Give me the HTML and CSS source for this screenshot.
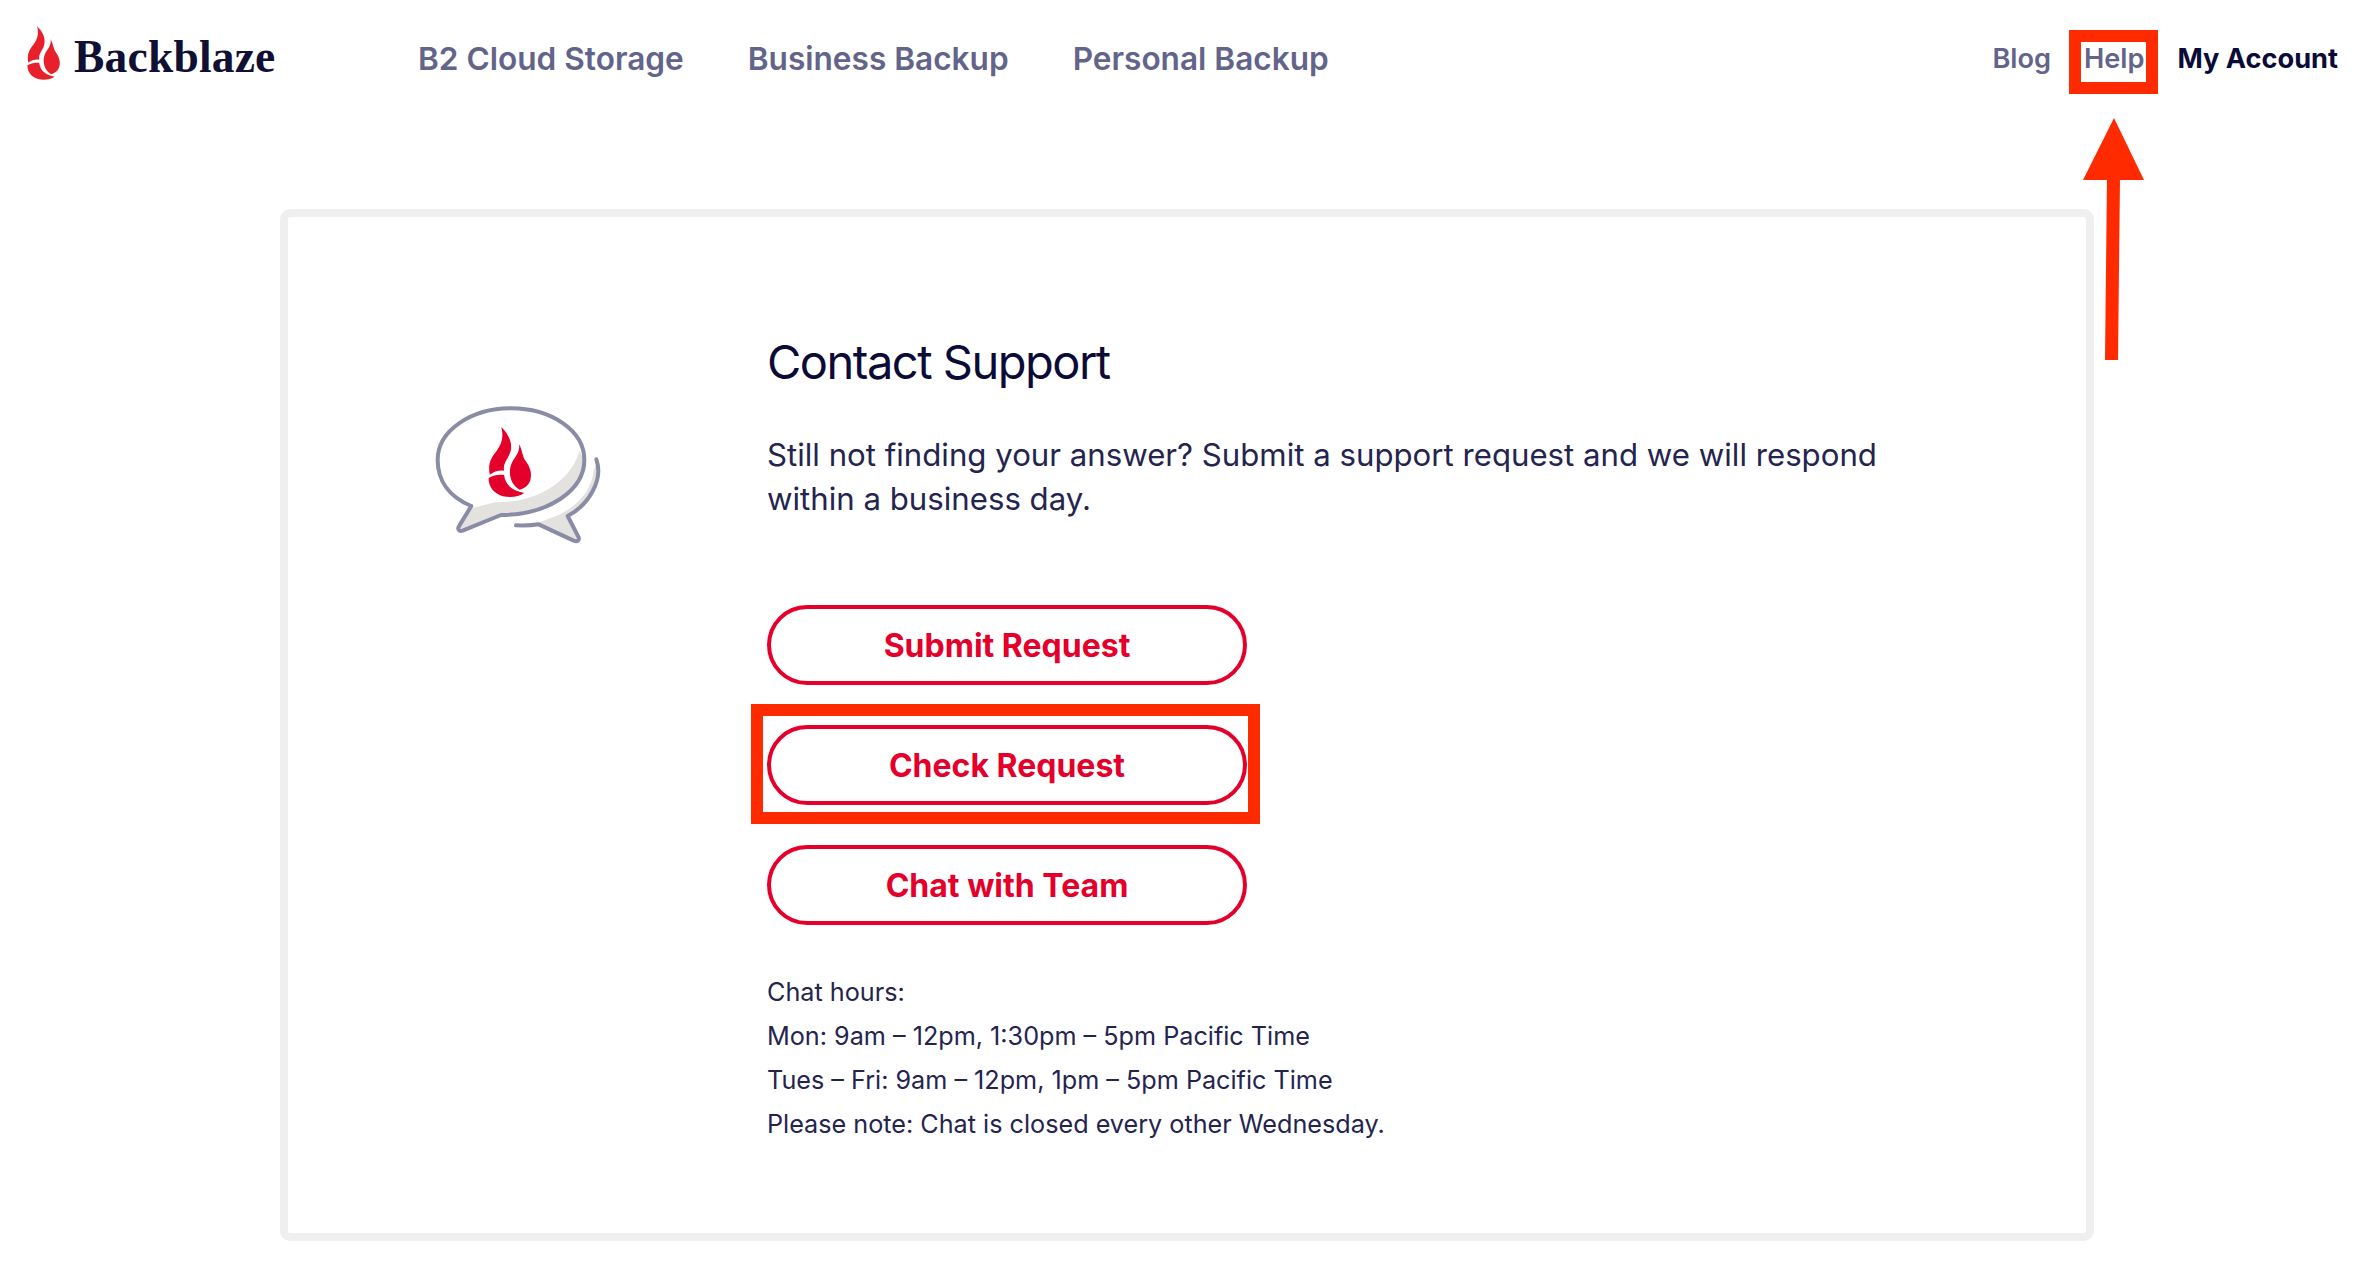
FILE: index.html
```html
<!DOCTYPE html>
<html lang="en">
<head>
  <meta charset="UTF-8" />
  <meta name="viewport" content="width=device-width, initial-scale=1.0" />
  <title>Contact Support - Backblaze</title>
  <link rel="stylesheet" href="styles.css">
</head>
<body>
  <svg class="defs" width="0" height="0">
    <symbol id="flame" viewBox="70 64 122 188">
      <path d="M110 70 C126 86 138 106 134 128 C130 148 113 160 117 180 C104 178 92 182 81 190 C75 162 85 146 98 130 C112 112 116 94 110 70 Z" />
      <path d="M155 113 C163 128 163 144 171 155 C182 170 188 186 183 204 C179 217 168 225 156 228 C141 218 134 206 132 190 C130 172 136 158 145 146 C152 136 156 126 155 113 Z" />
      <path d="M78 198 C92 191 104 188 117 191 C120 214 134 230 168 236 C150 249 116 249 100 238 C85 228 78 215 78 198 Z" />
    </symbol>
  </svg>

  <header class="topbar">
    <a class="logo" href="#">
      <svg class="logo-flame"><use href="#flame" /></svg>
      <span class="logo-text">Backblaze</span>
    </a>
    <nav class="main-nav">
      <a href="#">B2 Cloud Storage</a>
      <a href="#">Business Backup</a>
      <a href="#">Personal Backup</a>
    </nav>
    <nav class="side-nav">
      <a href="#">Blog</a>
      <a href="#">Help</a>
      <a class="account" href="#">My Account</a>
    </nav>
  </header>

  <main class="card">
    <div class="card-icon">
      <svg class="chat-icon" viewBox="0 0 720 570">
        <path class="shade" d="M575 270 C570 330 530 375 470 405 L405 430 L525 482 C532 480 531 474 528 470 L495 408 C550 378 590 325 583 250 Z" />
        <path class="shade" d="M532 212 C510 300 410 368 280 367 L208 385 L172 440 L178 452 L297 405 C440 405 547 330 547 240 Z" />
        <path class="line" d="M208 378 C140 350 107 300 107 240 C107 150 210 85 327 85 C445 85 547 150 547 240 C547 330 440 405 297 405 L182 452 C170 455 165 446 172 437 Z" />
        <path class="line" d="M583 238 C605 300 560 375 497 408 L530 472 C533 482 525 486 515 482 L410 433 C385 437 365 437 342 436" />
        <use class="chat-flame" href="#flame" x="250" y="134" width="146" height="224" />
      </svg>
    </div>
    <div class="card-body">
      <h1>Contact Support</h1>
      <p class="intro">Still not finding your answer? Submit a support request and we will respond within a business day.</p>
      <div class="actions">
        <a class="pill" href="#">Submit Request</a>
        <a class="pill" href="#">Check Request</a>
        <a class="pill" href="#">Chat with Team</a>
      </div>
      <div class="hours">
        <p>Chat hours:</p>
        <p>Mon: 9am – 12pm, 1:30pm – 5pm Pacific Time</p>
        <p>Tues – Fri: 9am – 12pm, 1pm – 5pm Pacific Time</p>
        <p>Please note: Chat is closed every other Wednesday.</p>
      </div>
    </div>
  </main>

  <!-- red annotations drawn over the page -->
  <div class="mark mark-help"></div>
  <div class="mark mark-check"></div>
  <svg class="mark-arrow" viewBox="0 0 64 244">
    <polygon points="32,0 62,62 1,62" />
    <polygon points="25,60 38,60 36,242 23,242" />
  </svg>
</body>
</html>
```

FILE: styles.css
```css
body {
  margin: 0;
  font-family: Inter, "Liberation Sans", sans-serif;
  background: #fff;
  color: #24244f;
}
a {
  text-decoration: none;
}
.defs {
  display: block;
}
.topbar {
  display: flex;
  align-items: center;
  height: 116px;
  padding: 0 18px 0 25px;
}
.logo {
  display: flex;
  align-items: center;
  gap: 12px;
  width: 393px;
  margin-top: -4px;
}
.logo-flame {
  width: 37px;
  height: 60px;
  margin-top: -6px;
  fill: #e8202c;
}
.logo-text {
  font-family: "Liberation Serif", serif;
  font-weight: bold;
  font-size: 45.5px;
  letter-spacing: 0.2px;
  color: #0f1033;
}
.main-nav {
  display: flex;
  gap: 64px;
}
.main-nav a,
.side-nav a {
  font-size: 31.6px;
  font-weight: 600;
  color: #62648a;
}
.side-nav {
  display: flex;
  align-items: center;
  gap: 33px;
  margin-left: auto;
}
.side-nav a {
  font-size: 27.2px;
}
.side-nav a.account {
  color: #0b0b38;
  font-weight: 700;
}
.card {
  display: flex;
  box-sizing: border-box;
  width: 1814px;
  height: 1032px;
  margin: 93px 0 0 280px;
  border: 8px solid #efefef;
  border-radius: 10px;
}
.card-icon {
  width: 479px;
  padding: 163px 0 0 114px;
  box-sizing: border-box;
}
.chat-icon {
  display: block;
  width: 240px;
  height: 190px;
}
.shade {
  fill: #e4e2df;
}
.line {
  fill: none;
  stroke: #8a8ca6;
  stroke-width: 12;
  stroke-linejoin: round;
  stroke-linecap: round;
}
.chat-flame {
  fill: #e4002b;
}
.card-body {
  flex: 1;
  padding-top: 113px;
}
h1 {
  margin: 0;
  font-size: 47px;
  font-weight: 400;
  letter-spacing: -1.5px;
  line-height: 64px;
  color: #0b0b38;
}
.intro {
  width: 1130px;
  margin: 39px 0 0;
  font-size: 31.2px;
  line-height: 44px;
}
.actions {
  display: flex;
  flex-direction: column;
  gap: 40px;
  margin-top: 84px;
}
.pill {
  display: flex;
  align-items: center;
  justify-content: center;
  box-sizing: border-box;
  width: 480px;
  height: 80px;
  border: 4px solid #e4002b;
  border-radius: 40px;
  font-size: 32px;
  font-weight: 700;
  color: #e4002b;
}
.hours {
  margin-top: 45px;
  font-size: 25.2px;
  line-height: 44px;
}
.hours p {
  margin: 0;
}
.mark {
  position: absolute;
  box-sizing: border-box;
  border: 12px solid #ff2a00;
}
.mark-help {
  left: 2069px;
  top: 30px;
  width: 89px;
  height: 64px;
}
.mark-check {
  left: 751px;
  top: 704px;
  width: 509px;
  height: 120px;
}
.mark-arrow {
  position: absolute;
  left: 2082px;
  top: 118px;
  width: 64px;
  height: 244px;
  fill: #ff2a00;
}
```
